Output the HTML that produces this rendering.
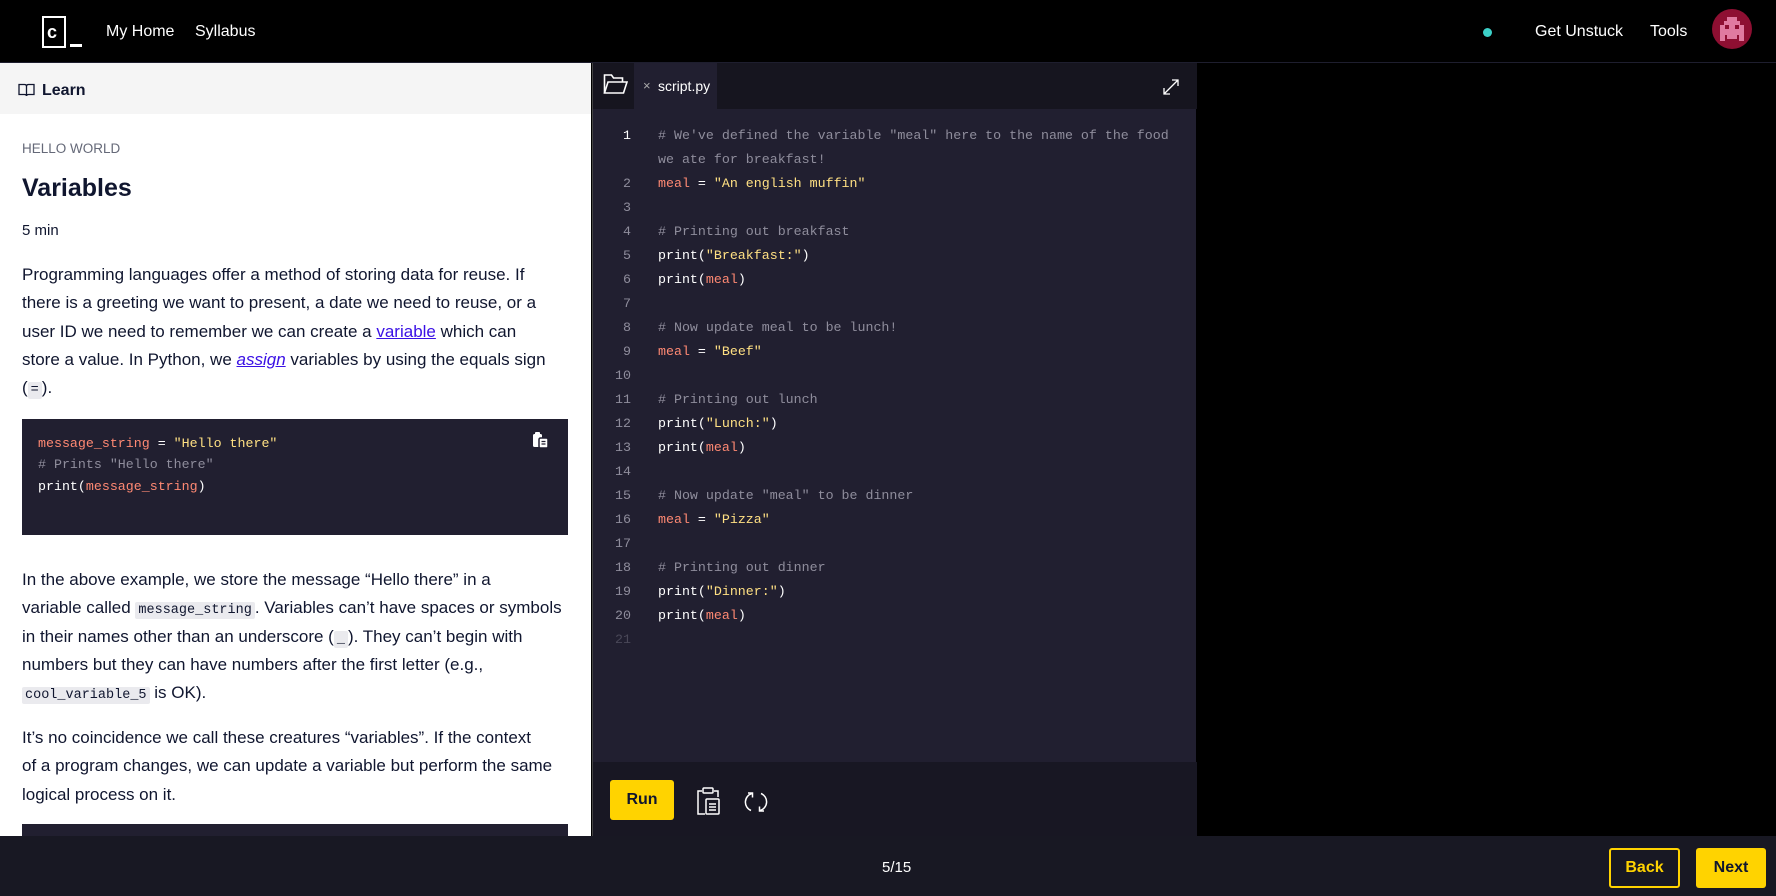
<!DOCTYPE html>
<html><head><meta charset="utf-8"><style>
*{margin:0;padding:0;box-sizing:border-box}
body{width:1776px;height:896px;overflow:hidden;background:#000;font-family:"Liberation Sans",sans-serif;position:relative}
.a{position:absolute}
.hdr{left:0;top:0;width:1776px;height:63px;background:#000;border-bottom:1px solid #1e1e2e}
.nav{color:#fff;font-size:16px;top:23px}
.left{left:0;top:63px;width:591px;height:773px;background:#fff;overflow:hidden}
.learn{left:0;top:0;width:591px;height:51px;background:#f5f5f5}
.p{left:22px;font-size:17px;color:#10162f;line-height:28.3px;white-space:nowrap}
.ic{font-family:"Liberation Mono",monospace;font-size:13.5px;background:#eaeaee;padding:1px 3px;border-radius:2px;line-height:1}
a{color:#3a10e5;text-decoration:underline}
.cb{left:22px;width:546px;background:#211f30;font-family:"Liberation Mono",monospace;font-size:13.3px;line-height:21.3px;color:#fff;padding:14px 16px}
.v{color:#ff8973}.s{color:#ffe083}.c{color:#8f8d9c}
.ed{left:592px;top:63px;width:604px;height:773px;background:#211f30;border-left:1px solid #444}
.tabs{left:0;top:0;width:604px;height:46px;background:#16151f}
.code{font-family:"Liberation Mono",monospace;font-size:13.3px;line-height:24px;color:#fff}
.ln{position:absolute;left:0;width:38px;text-align:right;color:#8f8d9c}
.cl{position:absolute;left:65px;white-space:nowrap}
.bot{left:0;top:836px;width:1776px;height:60px;background:#181823}
</style></head><body>
<div class="a hdr">
  <div class="a" style="left:42px;top:16px;width:24px;height:32px;border:2px solid #fff"></div>
  <div class="a" style="left:47px;top:22px;color:#fff;font-weight:bold;font-size:18px">c</div>
  <div class="a" style="left:70px;top:44px;width:12px;height:3px;background:#fff"></div>
  <div class="a nav" style="left:106px">My Home</div>
  <div class="a nav" style="left:195px">Syllabus</div>
  <div class="a" style="left:1483px;top:28px;width:9px;height:9px;border-radius:50%;background:#3cd0c8"></div>
  <div class="a nav" style="left:1535px">Get Unstuck</div>
  <div class="a nav" style="left:1650px">Tools</div>
  <div class="a" style="left:1712px;top:9px;width:40px;height:40px;border-radius:50%;background:#8e0f32;overflow:hidden">
    <svg width="40" height="40" viewBox="0 0 40 40"><g fill="#e07aa0"><rect x="15" y="8" width="10" height="4"/><rect x="12" y="12" width="16" height="4"/><rect x="8" y="16" width="5" height="4"/><rect x="17" y="16" width="6" height="4"/><rect x="27" y="16" width="5" height="4"/><rect x="8" y="20" width="24" height="6"/><rect x="8" y="26" width="5" height="6"/><rect x="27" y="26" width="5" height="6"/><rect x="15" y="26" width="10" height="4"/></g></svg>
  </div>
</div>
<div class="a left">
  <div class="a learn">
    <svg class="a" style="left:18px;top:20px" width="17" height="14" viewBox="0 0 17 14" fill="none" stroke="#10162f" stroke-width="1.3"><path d="M1 1.5h5.5c1.2 0 2 .8 2 2v9.5c0-.8-.8-1.5-2-1.5H1z M16 1.5h-5.5c-1.2 0-2 .8-2 2v9.5c0-.8.8-1.5 2-1.5H16z"/></svg>
    <div class="a" style="left:42px;top:19px;font-size:16px;font-weight:bold;color:#10162f">Learn</div>
  </div>
  <div class="a" style="left:22px;top:78px;font-size:13.5px;color:#656978">HELLO WORLD</div>
  <div class="a" style="left:22px;top:111px;font-size:25px;font-weight:bold;color:#10162f">Variables</div>
  <div class="a" style="left:22px;top:159px;font-size:15px;color:#10162f">5 min</div>
  <div class="a p" style="top:198px">Programming languages offer a method of storing data for reuse. If<br>there is a greeting we want to present, a date we need to reuse, or a<br>user ID we need to remember we can create a <a>variable</a> which can<br>store a value. In Python, we <a><i>assign</i></a> variables by using the equals sign<br>(<span class="ic">=</span>).</div>
  <div class="a cb" style="top:356px;height:116px">
    <span class="v">message_string</span> = <span class="s">"Hello there"</span><br><span class="c"># Prints "Hello there"</span><br>print(<span class="v">message_string</span>)
    <svg class="a" style="left:510px;top:12px" width="17" height="18" viewBox="0 0 17 18" fill="#fff"><rect x="1" y="3" width="9" height="13" rx="1.5"/><rect x="3" y="1" width="5" height="3" rx="1"/><rect x="7" y="7" width="9" height="10" rx="1.5" stroke="#211f30" stroke-width="1.5"/><path d="M9.5 10.5h4M9.5 13h4" stroke="#211f30" stroke-width="1.2"/></svg>
  </div>
  <div class="a p" style="top:503px">In the above example, we store the message “Hello there” in a<br>variable called <span class="ic">message_string</span>. Variables can’t have spaces or symbols<br>in their names other than an underscore (<span class="ic">_</span>). They can’t begin with<br>numbers but they can have numbers after the first letter (e.g.,<br><span class="ic">cool_variable_5</span> is OK).</div>
  <div class="a p" style="top:661px">It’s no coincidence we call these creatures “variables”. If the context<br>of a program changes, we can update a variable but perform the same<br>logical process on it.</div>
  <div class="a cb" style="top:761px;height:40px"></div>
</div>
<div class="a ed">
  <div class="a tabs">
    <svg class="a" style="left:10px;top:10px" width="25" height="22" viewBox="0 0 25 22" fill="none" stroke="#fff" stroke-width="1.6"><path d="M1.5 20V2h7l2 3h9v4"/><path d="M1.5 20l3.5-11h19l-3.5 11z"/></svg>
    <div class="a" style="left:41px;top:0;width:83px;height:46px;background:#211f30"></div>
    <div class="a" style="left:50px;top:15px;color:#aaa;font-size:13px">×</div>
    <div class="a" style="left:65px;top:15px;color:#fff;font-size:14px">script.py</div>
    <svg class="a" style="left:569px;top:15px" width="18" height="18" viewBox="0 0 18 18" fill="none" stroke="#fff" stroke-width="1.3"><path d="M2 16L16 2M10 2h6v6M2 10v6h6"/></svg>
  </div>
  <div class="a code" style="left:0;top:61px;width:600px">
    <div class="ln" style="top:0;color:#fff">1</div><div class="cl c" style="top:0">#&nbsp;We've defined the variable "meal" here to the name of the food</div>
    <div class="cl c" style="top:24px">we ate for breakfast!</div>
    <div class="ln" style="top:48px">2</div><div class="cl" style="top:48px"><span class="v">meal</span> = <span class="s">"An english muffin"</span></div>
    <div class="ln" style="top:72px">3</div>
    <div class="ln" style="top:96px">4</div><div class="cl c" style="top:96px"># Printing out breakfast</div>
    <div class="ln" style="top:120px">5</div><div class="cl" style="top:120px">print(<span class="s">"Breakfast:"</span>)</div>
    <div class="ln" style="top:144px">6</div><div class="cl" style="top:144px">print(<span class="v">meal</span>)</div>
    <div class="ln" style="top:168px">7</div>
    <div class="ln" style="top:192px">8</div><div class="cl c" style="top:192px"># Now update meal to be lunch!</div>
    <div class="ln" style="top:216px">9</div><div class="cl" style="top:216px"><span class="v">meal</span> = <span class="s">"Beef"</span></div>
    <div class="ln" style="top:240px">10</div>
    <div class="ln" style="top:264px">11</div><div class="cl c" style="top:264px"># Printing out lunch</div>
    <div class="ln" style="top:288px">12</div><div class="cl" style="top:288px">print(<span class="s">"Lunch:"</span>)</div>
    <div class="ln" style="top:312px">13</div><div class="cl" style="top:312px">print(<span class="v">meal</span>)</div>
    <div class="ln" style="top:336px">14</div>
    <div class="ln" style="top:360px">15</div><div class="cl c" style="top:360px"># Now update "meal" to be dinner</div>
    <div class="ln" style="top:384px">16</div><div class="cl" style="top:384px"><span class="v">meal</span> = <span class="s">"Pizza"</span></div>
    <div class="ln" style="top:408px">17</div>
    <div class="ln" style="top:432px">18</div><div class="cl c" style="top:432px"># Printing out dinner</div>
    <div class="ln" style="top:456px">19</div><div class="cl" style="top:456px">print(<span class="s">"Dinner:"</span>)</div>
    <div class="ln" style="top:480px">20</div><div class="cl" style="top:480px">print(<span class="v">meal</span>)</div>
    <div class="ln" style="top:504px;color:#4a4858">21</div>
  </div>
  <div class="a" style="left:0;top:699px;width:604px;height:74px;background:#181723"></div>
  <div class="a" style="left:17px;top:717px;width:64px;height:40px;background:#ffd300;border-radius:3px;font-weight:bold;font-size:16px;color:#10162f;text-align:center;line-height:40px">Run</div>
  <svg class="a" style="left:102px;top:724px" width="26" height="28" viewBox="0 0 26 28" fill="none" stroke="#fff" stroke-width="1.5"><path d="M7 4H3v23h7M19 4h4v6"/><rect x="8" y="1" width="10" height="5" rx="1"/><rect x="11" y="12" width="13" height="15" rx="1"/><path d="M14 17h7M14 20h7M14 23h7"/></svg>
  <svg class="a" style="left:150px;top:726px" width="26" height="26" viewBox="0 0 26 26" fill="none" stroke="#fff" stroke-width="1.5"><path d="M9 4.5A9 9 0 0 0 8 21.5M17 21.5A9 9 0 0 0 18 4.5"/><path d="M5 4h4.5v4.5M21 22h-4.5v-4.5"/></svg>
</div>
<div class="a" style="left:1197px;top:63px;width:579px;height:773px;background:#000"></div>
<div class="a bot">
  <div class="a" style="left:882px;top:23px;color:#fff;font-size:15px">5/15</div>
  <div class="a" style="left:1609px;top:12px;width:71px;height:40px;border:2px solid #ffd300;border-radius:3px;color:#ffd300;font-weight:bold;font-size:16px;text-align:center;line-height:36px">Back</div>
  <div class="a" style="left:1696px;top:12px;width:70px;height:40px;background:#ffd300;border-radius:3px;color:#10162f;font-weight:bold;font-size:16px;text-align:center;line-height:40px">Next</div>
</div>
</body></html>
